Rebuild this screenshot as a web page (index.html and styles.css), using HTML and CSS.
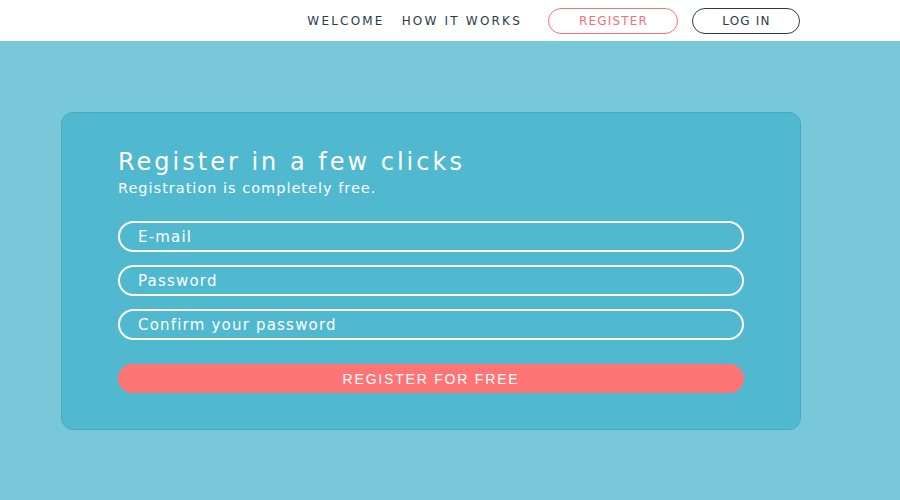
FILE: index.html
```html
<html lang="en">
<head>
  <title>Register</title>
  <meta charset="UTF-8">
  <meta name="viewport" content="width=device-width, initial-scale=1">
  <link rel="stylesheet" href="styles.css">
</head>
<body>
  <header class="top-bar">
    <nav class="nav">
      <a class="nav-link" href="#">WELCOME</a>
      <a class="nav-link" href="#">HOW IT WORKS</a>
      <a class="nav-button register" href="#">REGISTER</a>
      <a class="nav-button login" href="#">LOG IN</a>
    </nav>
  </header>
  <div class="main">
    <div class="card">
      <h1 class="title">Register in a few clicks</h1>
      <p class="subtitle">Registration is completely free.</p>
      <form class="form">
        <input class="field" type="email" placeholder="E-mail">
        <input class="field" type="password" placeholder="Password">
        <input class="field" type="password" placeholder="Confirm your password">
        <button class="submit" type="button">REGISTER FOR FREE</button>
      </form>
    </div>
  </div>
</body>
</html>
```

FILE: styles.css
```css
*{
  box-sizing: border-box;
  font-family: "DejaVu Sans", "Open Sans", sans-serif;
}
body{
  margin: 0;
  background: #78c8da;
  height: 500px;
}
.top-bar{
  height: 41px;
  background: white;
}
.nav{
  display: flex;
  align-items: center;
  justify-content: flex-end;
  height: 100%;
  padding-right: 100px;
}
.nav-link{
  color: #2d3a4a;
  text-decoration: none;
  font-size: 12px;
  letter-spacing: 2.2px;
  margin-right: 17px;
}
.nav-link + .nav-link{
  margin-right: 26px;
}
.nav-button{
  display: flex;
  align-items: center;
  justify-content: center;
  height: 26px;
  border-radius: 13px;
  font-size: 12px;
  letter-spacing: 1.2px;
  padding-left: 1px;
  text-decoration: none;
  background: white;
}
.register{
  width: 130px;
  color: #f07474;
  border: 1.5px solid #f07474;
  margin-right: 14px;
}
.login{
  width: 108px;
  color: #2d3a4a;
  border: 1.5px solid #2d3a4a;
}
.main{
  padding: 71px 0 0 61px;
}
.card{
  width: 740px;
  background: #50b9d0;
  border: 1px solid #46a9c1;
  border-radius: 12px;
  padding: 35px 56px 36px 56px;
}
.title{
  margin: 0;
  color: white;
  font-size: 24px;
  font-weight: normal;
  letter-spacing: 3px;
  line-height: 28px;
}
.subtitle{
  margin: 3px 0 0 0;
  color: white;
  font-size: 14.5px;
  letter-spacing: 1px;
  line-height: 18px;
}
.form{
  display: flex;
  flex-direction: column;
  margin: 24px 0 0 0;
}
.field{
  height: 31px;
  border: 2px solid white;
  border-radius: 16px;
  background: transparent;
  padding: 0 18px;
  font-size: 15px;
  letter-spacing: 1.2px;
  color: white;
  margin-bottom: 13px;
  outline: none;
}
.field::placeholder{
  color: white;
}
.submit{
  margin-top: 11px;
  height: 29px;
  border: none;
  border-radius: 15px;
  background: #ff7575;
  color: white;
  font-family: "Liberation Sans", sans-serif;
  font-size: 14px;
  letter-spacing: 1.8px;
}
```
